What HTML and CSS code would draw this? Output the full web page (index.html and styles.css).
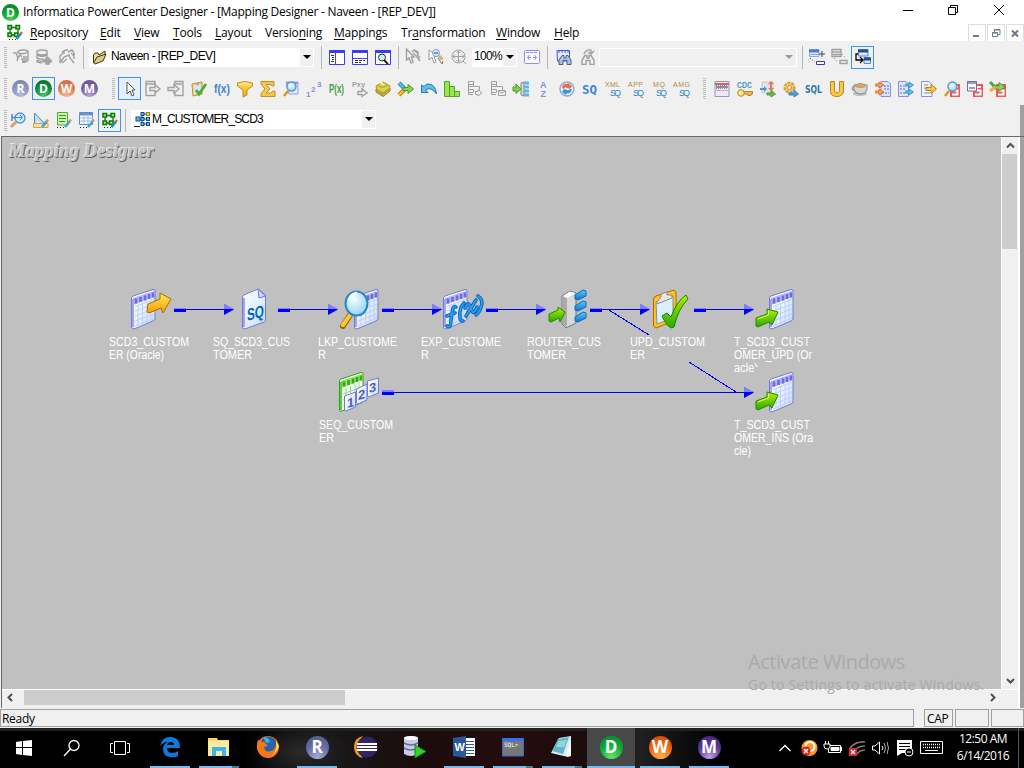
FILE: index.html
```html
<!DOCTYPE html>
<html lang="en">
<head>
<meta charset="utf-8">
<title>Informatica PowerCenter Designer</title>
<link rel="stylesheet" href="styles.css">
</head>
<body>
<svg class="defs" width="0" height="0">
  <defs>
    <linearGradient id="paper" x1="0" y1="0" x2="1" y2="1"><stop offset="0" stop-color="#fff"/><stop offset=".5" stop-color="#e4f2ff"/><stop offset="1" stop-color="#bcdcff"/></linearGradient>
    <linearGradient id="gold" x1="0" y1="0" x2="0" y2="1"><stop offset="0" stop-color="#ffe95a"/><stop offset="1" stop-color="#f0a000"/></linearGradient>
    <linearGradient id="lime" x1="0" y1="0" x2="0" y2="1"><stop offset="0" stop-color="#b4f000"/><stop offset="1" stop-color="#28a800"/></linearGradient>
    <linearGradient id="sky" x1="0" y1="0" x2="0" y2="1"><stop offset="0" stop-color="#5cc8ff"/><stop offset="1" stop-color="#0a74d0"/></linearGradient>
    <radialGradient id="lens" cx=".4" cy=".35" r=".7"><stop offset="0" stop-color="#f4fdff"/><stop offset="1" stop-color="#8ed2f4"/></radialGradient>
    <symbol id="sheet" viewBox="0 0 26 42">
      <path d="M1.500 10Q1.500 9 3 8L23 1.500Q25 1 25 3V31Q25 32 23 33L4 41Q1.500 41 1.500 39Z" fill="url(#paper)" stroke="#7676d8"/>
      <path d="M3 10L24 3V9L3 17Z" fill="#b6b6f6"/>
      <path d="M6 10.500v5M10.500 9v5M15 7.500v5M19 6v5M23 4.500v5" stroke="#6c6ce0" stroke-width="2.600"/>
      <path d="M5 18.500L24 11.500M5 23L24 16M5 28L24 21M5 33L24 26M5 38L24 30" stroke="#c4ccf8"/>
      <path d="M8 17V38M12.500 15V36M17 13V35M21 11V33" stroke="#c4ccf8"/>
      <path d="M3 11V39" stroke="#a4a4f6" stroke-width="2"/>
    </symbol>
    <symbol id="sheetGreen" viewBox="0 0 26 42">
      <path d="M1.500 10Q1.500 9 3 8L23 1.500Q25 1 25 3V31L4 40Q1.500 41 1.500 39Z" fill="#f2fff2" stroke="#2e9e20"/>
      <path d="M3 10L24 3V9L3 17Z" fill="#8ce460"/>
      <path d="M6 10.500v5M10.500 9v5M15 7.500v5M19 6v5M23 4.500v5" stroke="#3aa818" stroke-width="2.600"/>
      <path d="M5 23L24 16M5 29L24 22M5 35L24 28M8 17V38M12.500 15V36M17 13V35M21 11V33" stroke="#8cdc8c"/>
      <path d="M3 11V39" stroke="#5ccc40" stroke-width="2"/>
    </symbol>
    <symbol id="pushGreen" viewBox="0 0 26 22"><path d="M2 12L13 8V3L24 6L18 19L15 16L4 21L2 20Z" fill="url(#lime)" stroke="#258a00"/><path d="M3.500 13L14.500 9V5" fill="none" stroke="#e4ff60"/></symbol>
    <symbol id="fold" viewBox="0 0 16 16"><path d="M1.500 14V6L3 4H6L7 6L13 2V7" fill="#e9dd98" stroke="#403818"/><path d="M1.500 14L5 8L14 5L11 12L3 15Z" fill="#d8cc88" stroke="#403818"/></symbol>
    <symbol id="graph" viewBox="0 0 16 16"><g fill="#a4f080" stroke="#087808" stroke-width="1.500"><rect x="1" y="1.500" width="3.500" height="3.500"/><rect x="9" y="1.500" width="3.500" height="3.500"/><rect x="1" y="9" width="3.500" height="3.500"/><rect x="7.500" y="9" width="3.500" height="3.500"/></g><path d="M5 3.500H9M3 5.500V9M11 5.500V9M5 11H8" stroke="#087808" stroke-width="1.300"/><path d="M9.500 15L14 9.500" stroke="#1888d8" stroke-width="2.500"/><path d="M13.500 10L15 8" stroke="#f06040" stroke-width="2.500"/><path d="M2 15.500H9" stroke="#222" stroke-dasharray="1 2"/></symbol>
    <symbol id="pen" viewBox="0 0 16 16"><path d="M9 15L14 9" stroke="#3ba2df" stroke-width="2.500"/><path d="M13.500 9.500L15 7.500" stroke="#f38c65" stroke-width="2.500"/></symbol>
    <symbol id="dots" viewBox="0 0 16 16"><path d="M1 15.500H9" stroke="#222" stroke-dasharray="1 2"/></symbol>
    <symbol id="badge" viewBox="0 0 16 16"><rect x="6" y="3" width="10" height="13" fill="#f05858"/><path d="M14 6H9.500V9.500H13.500V13.500H8" fill="none" stroke="#fff" stroke-width="2"/></symbol>
    <symbol id="mag" viewBox="0 0 16 16"><path d="M5 10L1 15" stroke="#d59a30" stroke-width="2.600"/><circle cx="8.500" cy="5.500" r="4.500" fill="url(#lens)" stroke="#5c91cd" stroke-width="1.400"/></symbol>
    <symbol id="binoc" viewBox="0 0 16 16"><path d="M3 15.500V11L6 6.500H8V9H10V6.500H12L15 11V15.500H11V11.500H7V15.500Z"/></symbol>
  </defs>
</svg>

<header class="title">
  <span class="ball green app">D</span>
  <h1>Informatica PowerCenter Designer - [Mapping Designer - Naveen - [REP_DEV]]</h1>
  <svg class="winbtns" width="108" height="20" viewBox="0 0 108 20" fill="none" stroke="#000"><path d="M1 8.500H11"/><path d="M46.500 5.500H53.500V12.500H46.500ZM48.500 5V3.500H55.500V10.500H54"/><path d="M92 3L102 13M102 3L92 13"/></svg>
</header>

<nav class="menu">
  <svg class="i menuicon"><use href="#graph"/></svg>
  <span class="m1"><u>R</u>epository</span><span class="m2"><u>E</u>dit</span><span class="m3"><u>V</u>iew</span><span class="m4"><u>T</u>ools</span><span class="m5"><u>L</u>ayout</span><span class="m6">Versio<u>n</u>ing</span><span class="m7"><u>M</u>appings</span><span class="m8">Tr<u>a</u>nsformation</span><span class="m9"><u>W</u>indow</span><span class="m10"><u>H</u>elp</span>
  <div class="mdi">
    <b><svg width="16" height="16"><path d="M4 11H10" stroke="#6b7a8c" stroke-width="2"/></svg></b>
    <b><svg width="16" height="16" fill="none" stroke="#6b7a8c"><path d="M4.500 7.500H9.500V11.500H4.500ZM4 8H10M6.500 7V4.500H12V9.500H10M6 5H12"/></svg></b>
    <b><svg width="16" height="16"><path d="M5 5.500L11 11.500M11 5.500L5 11.500" stroke="#6b7a8c" stroke-width="2"/></svg></b>
  </div>
</nav>

<section class="tools">
  <div class="bar bar1">
    <i class="grip"></i>
    <span class="c"><svg class="i gray"><path d="M5 2Q10 0 15 2V11Q13 14 9 13M5 2V4M5 4Q10 6 15 3M0 4H3L5 9L7 6L9 8M5 9L4 12M8 10H14M9 12H13M10 8H14"/></svg></span>
    <span class="c"><svg class="i gray"><path d="M1 2Q6 0 11 2V5Q6 7 1 5ZM1 6Q6 9 11 6V9M1 6V9Q5 11 8 10M1 11Q4 13 8 12M1 11V13L6 14"/><path class="solid" d="M10 9H13V11H15V13H13V15H10V13H8V11H10Z"/></svg></span>
    <span class="c"><svg class="i gray"><path d="M1 14V7L4 4H6M3 3L7 1H9M9 3L13 1L15 4V10M1 14L5 8L10 6L11 9L15 14M8 10L3 14M12 4L15 7"/></svg></span>
    <i class="sep s83"></i>
    <span class="combo proj"><svg class="i"><use href="#fold"/></svg><span class="val">Naveen - [REP_DEV]</span><i class="dd"></i></span>
    <i class="sep s321"></i>
    <span class="c"><svg class="i pane"><path d="M.5 1.500H15.500V15.500H.5ZM6.500 3V15"/><path class="head" d="M0 2.500H16"/><path d="M2 6.500H5M3 8.500H5M3 10.500H5M2 12.500H5" stroke="#333"/></svg></span>
    <span class="c"><svg class="i pane"><path d="M.5 1.500H15.500V15.500H.5ZM1 9.500H15"/><path class="head" d="M0 2.500H16"/><path d="M3 11.500H13M3 13.500H9" stroke="#333" stroke-dasharray="3 1"/></svg></span>
    <span class="c"><svg class="i pane"><path d="M.5 1.500H15.500V15.500H.5Z"/><path class="head" d="M0 2.500H16"/><circle cx="7" cy="8.500" r="3.500" fill="#c0f6f0" stroke="#333"/><path d="M9 11L13 15" stroke="#222" stroke-width="2"/></svg></span>
    <i class="sep s398"></i>
    <span class="c"><svg class="i gray"><path d="M1.500 0V11L4 9L6 14L8 13L6.500 8H9ZM7 3L9 1L12 4M8 4L12 8L15 12M12 5L15 9M10 1L13 3V7"/></svg></span>
    <span class="c"><svg class="i"><path d="M1 1V11L4 8L6 14L8 13L6 7H10Z" fill="#fff" stroke="#9a9a9a"/><path d="M11 7L14.500 10.500" stroke="#e0b060" stroke-width="3"/><circle cx="8" cy="4" r="3.500" fill="#dff4ff" stroke="#7794c9"/><path d="M6 4H10" stroke="#4070c0" stroke-width="1.500"/><path d="M10 9L14 15L15 12" stroke="#777"/></svg></span>
    <span class="c"><svg class="i gray fine"><circle cx="7.500" cy="7.500" r="6.500"/><path d="M7.500 2V13M2 7.500H13M5.500 4L7.500 2L9.500 4M5.500 11L7.500 13L9.500 11M4 5.500L2 7.500L4 9.500M11 5.500L13 7.500L11 9.500M12 12L15 15"/></svg></span>
    <span class="combo pct"><span class="val">100%</span><i class="dd"></i></span>
    <span class="c afterpct"><svg class="i"><g fill="#f8f8ff" stroke="#8f8ff3"><rect x=".5" y="1.500" width="15" height="13" rx="1"/><path d="M5.500 6L3.500 8.500L5.500 11M10.500 6L12.500 8.500L10.500 11M4 8.500H7M9 8.500H12" fill="none"/><path d="M2 3.500H14" stroke-dasharray="3 1"/></g></svg></span>
    <i class="sep s548"></i>
    <span class="c"><svg class="i"><path d="M1 1.500H13.500V12H1.500Z" fill="#e4efff" stroke="#3f53ec"/><path d="M2 3H13" stroke="#3f53ec" stroke-dasharray="2 1"/><g fill="#b0c0d8" stroke="#4b6288"><use href="#binoc"/></g></svg></span>
    <span class="c"><svg class="i gray"><g fill="none" stroke="#a0a0a0" stroke-width="1.400"><use href="#binoc"/></g><path d="M5 5Q7 0 12 1V4M9 3L12 5L15 2"/></svg></span>
    <span class="combo blank"><i class="dd"></i></span>
    <i class="sep s802"></i>
    <span class="c"><svg class="i"><path d="M.5 .5H10V7.500H.5Z" fill="#e1ecff" stroke="#8fa9de"/><path d="M0 2H10" stroke="#4e79d5" stroke-width="3"/><path d="M1 5.500H10" stroke="#8fa9de"/><path d="M10 5H16M13 2V8" stroke="#444"/><path d="M1 9L6 13" stroke="#333" stroke-dasharray="1 2"/><path d="M7.500 12.500H15.500V15.500H7.500Z" fill="#fff" stroke="#3939ae"/></svg></span>
    <span class="c"><svg class="i gray"><path d="M0 .5H9V7.500H0ZM0 3H9M1 5.500H9M8 11.500H15V14.500H8Z"/><path d="M2 9L6 13M10 5L14 9" stroke-dasharray="1 2"/></svg></span>
    <span class="c on"><svg class="i"><g fill="#d8e9ff" stroke="#5c82cd"><path d="M3.500 .5H13V7H3.500ZM9 8.500H15.500V14.500H9Z"/></g><path d="M3 2H13M9 10H16" stroke="#294c99" stroke-width="3"/><path d="M3 5H1V11H7M5 8L8 11L5 14" fill="none" stroke="#000" stroke-width="1.300"/></svg></span>
  </div>

  <div class="bar bar2">
    <i class="grip"></i>
    <span class="c"><span class="ball slate">R</span></span><span class="c on"><span class="ball green">D</span></span><span class="c"><span class="ball orange">W</span></span><span class="c"><span class="ball purple">M</span></span>
    <i class="grip g114"></i>
    <span class="c on tint"><svg class="i"><path d="M5 1V13L8 10L10 15L12 14L10 9H13Z" fill="#fff" stroke="#555"/></svg></span>
    <span class="c"><svg class="i gray"><path d="M10 5V.5H1V14.500H10V12M1 3H10M5 6.500H10V3.500L15 8L10 12V9.500H5Z"/></svg></span>
    <span class="c"><svg class="i gray"><path d="M7 4V.5H15V14.500H7V12M8 3H14M0 6.500H6V3.500L11 8L6 12V9.500H0Z"/></svg></span>
    <span class="c"><svg class="i"><path d="M1 3L11 1V13L2 15Z" fill="#efd986" stroke="#bd8f3c"/><path d="M3 5L10 4V11L3 13Z" fill="#cfeafa"/><path d="M5 2L8 1V4L5 4Z" fill="#aaa"/><path d="M5 9L8 13L15 3" fill="none" stroke="#4dab3b" stroke-width="2.800"/></svg></span>
    <span class="c"><svg class="i"><text x="0" y="12" font-size="12" font-weight="700" fill="#3b84cf" textLength="16" lengthAdjust="spacingAndGlyphs">f(x)</text></svg></span>
    <span class="c"><svg class="i"><path d="M.5 2Q8-1 15.500 2V5L10 9V14L6 16V9L.5 5Z" fill="url(#gold)" stroke="#c48d2b"/><ellipse cx="8" cy="3" rx="6" ry="1.500" fill="#ffe07c"/></svg></span>
    <span class="c"><svg class="i"><path d="M1 .5H14V5H12L11 3.500H6L10 8L6 12H11L13 10H15V15.500H1V12.500L5 8L1 3Z" fill="#f4c848" stroke="#c38d2d"/></svg></span>
    <span class="c"><svg class="i"><path d="M3 1H15V13H6Z" fill="#e6e9ff" stroke="#9999df"/><path d="M4 2H15" stroke="#9999df" stroke-width="2"/><use href="#mag"/></svg></span>
    <span class="c"><svg class="i pix"><text x="0" y="16" font-size="8">1</text><text x="5" y="11" font-size="8">2</text><text x="11" y="6" font-size="8">3</text></svg></span>
    <span class="c"><svg class="i"><text x="0" y="12" font-size="12" font-weight="700" fill="#459d45" textLength="15" lengthAdjust="spacingAndGlyphs">P(x)</text></svg></span>
    <span class="c"><svg class="i gray"><path d="M6 10.500H10V8L15 12L10 15.500V13.500H6Z"/><text x="0" y="6" font-size="8" font-weight="700" textLength="13" lengthAdjust="spacingAndGlyphs">Pxy</text></svg></span>
    <span class="c"><svg class="i"><path d="M1 8L7 13L15 7V10L8 15.500L1 11Z" fill="#dfa62d" stroke="#b37918"/><path d="M1 5L8 1L15 5L14 9L8 13L2 9Z" fill="#f4c846" stroke="#be8c27"/><path d="M3 4Q8 9 13 3M3 9L8 12L13 8" fill="none" stroke="#7cc853" stroke-width="1.500"/><path d="M5 1L9 4" stroke="#fff4b0" stroke-width="2"/></svg></span>
    <span class="c"><svg class="i"><path d="M1 2L7 8" stroke="#2a87c9" stroke-width="4"/><path d="M1 2L7 8" stroke="#60c4f2" stroke-width="2"/><path d="M1 14L7 8" stroke="#b98008" stroke-width="4"/><path d="M1 14L7 8" stroke="#f6cc34" stroke-width="2"/><path d="M5 6.500H10V3.500L15.500 8L10 12.500V9.500H5Z" fill="#85d746" stroke="#4a9836"/></svg></span>
    <span class="c"><svg class="i"><path d="M.5 4V11.500H7L4.500 9Q10 5 15.500 13Q14.500 3 7 3Q4.500 3 3 5.500Z" fill="#63bced" stroke="#2578ae"/></svg></span>
    <span class="c"><svg class="i"><path d="M.5 .5H5.500V15.500H.5ZM5.500 5.500H10.500V15.500H5.500ZM10.500 10.500H15.500V15.500H10.500Z" fill="#9ae54c" stroke="#4da52f"/></svg></span>
    <span class="c"><svg class="i gray fine"><path d="M1.500 .5H6.500V5.500H1.500ZM1 3.500H6M1.500 5V13.500H6M1.500 8.500H6.500V11.500H1.500ZM7 5.500H12.500V9M8.500 10.500H11V8.500L15 12L11 15V13.500H8.500Z"/></svg></span>
    <span class="c"><svg class="i gray fine"><path d="M1.500 .5H6.500V5.500H1.500ZM1 3.500H6M1.500 5V13.500H6M1.500 8.500H6.500V11.500H1.500ZM8.500 9.500H15.500V14.500H8.500ZM8.500 10L12 12L15 10M7 5.500H12.500V9"/></svg></span>
    <span class="c"><svg class="i"><path d="M0 6H3V3L8 8L3 12.500V10H0Z" fill="#7dcf45" stroke="#459c30"/><path d="M8 2L11 1V15L8 14Z" fill="#d5d5d5" stroke="#888"/><path d="M11 2H16M11 6H16M11 10H16M11 14H16" stroke="#5cb7e7" stroke-width="3"/></svg></span>
    <span class="c"><svg class="i pix"><text x="4" y="7" font-size="9">A</text><text x="4.500" y="16" font-size="9">Z</text></svg></span>
    <span class="c"><svg class="i"><circle cx="8" cy="8" r="7" fill="#e2f4ff" stroke="#99a6d8" stroke-width="1.500"/><path d="M3 7Q4 2 8 3L9 2L13 5L11 8L8 7Q6 5 5 8Z" fill="#ed6d3d"/><path d="M13 8Q12 13 8 12L7 14L3 11L5 8L8 9Q10 10 11 8Z" fill="#3c94d9"/></svg></span>
    <span class="c"><svg class="i mono"><text x="0" y="13" font-size="13" fill="#3c86d1" textLength="15" lengthAdjust="spacingAndGlyphs">SQ</text></svg></span>
    <span class="c"><svg class="i duo"><text x="0" y="6" textLength="15">XML</text><text class="q" x="5" y="15" textLength="11">SQ</text></svg></span>
    <span class="c"><svg class="i duo"><text x="0" y="6" textLength="15">APP</text><text class="q" x="5" y="15" textLength="11">SQ</text></svg></span>
    <span class="c"><svg class="i duo"><text x="2" y="6" textLength="12">MQ</text><text class="q" x="5" y="15" textLength="11">SQ</text></svg></span>
    <span class="c"><svg class="i duo"><text x="-1" y="6" textLength="17">AMG</text><text class="q" x="5" y="15" textLength="11">SQ</text></svg></span>
    <i class="grip g705"></i>
    <span class="c"><svg class="i"><path d="M1 .5H15V15.500H1Z" fill="#e8ecfc" stroke="#8998c4"/><path d="M1 3H15" stroke="#e95b4d" stroke-width="2"/><path d="M2 5H14M2 7H14" stroke="#333" stroke-dasharray="1 1"/><path d="M3 6H15" stroke="#333" stroke-dasharray="1 1"/><path d="M2 9.500H14" stroke="#e9a09a"/></svg></span>
    <span class="c"><svg class="i"><text x="0" y="7" font-size="9" font-weight="700" fill="#3d96d5" textLength="15" lengthAdjust="spacingAndGlyphs">CDC</text><path d="M5 10.500H15.500V13H14V14.500H11V13H5" fill="#efbd46" stroke="#b9882b"/><circle cx="4" cy="12" r="3.300" fill="#ffe173" stroke="#b9882b"/><circle cx="3" cy="12" r="1" fill="#fff"/></svg></span>
    <span class="c"><svg class="i"><path d="M2 1H13V12H2Z" fill="#e3e3e3" stroke="#ccc"/><path d="M0 7H4V5L7 8L4 11V9H0" fill="#3e9cd7"/><path d="M11 1V9" stroke="#eb794d" stroke-width="2"/><path d="M8 3L11 0L14 3ZM8 7L11 10L14 7Z" fill="#eb794d"/><path d="M7 12H11V9.500L15.500 13L11 16V14H7Z" fill="#67b94a" stroke="#4c9b35"/></svg></span>
    <span class="c"><svg class="i"><circle cx="6.500" cy="6.500" r="4.800" fill="#f5cf76" stroke="#d7a43d" stroke-width="2.500" stroke-dasharray="3 1"/><circle cx="6.500" cy="6.500" r="2" fill="#fff" stroke="#bc8f34"/><path d="M6 12H11V9L15.500 13L11 16V14H6Z" fill="#4ea4dc" stroke="#3680c0"/></svg></span>
    <span class="c"><svg class="i"><text x="-1" y="12" font-size="10" font-weight="700" font-family="DejaVu Sans" fill="#3676a1" textLength="17" lengthAdjust="spacingAndGlyphs">SQL</text></svg></span>
    <span class="c"><svg class="i"><path d="M1.500 .5H5.500V10Q8 13.500 10.500 10V.5H14.500V11Q13 15.500 8 15.500Q2 15.500 1.500 11Z" fill="#f8c83d" stroke="#bd8627"/></svg></span>
    <span class="c"><svg class="i"><ellipse cx="8" cy="12.500" rx="7" ry="2.500" fill="#bbb"/><path d="M2 4Q8 1 15 4V9Q13 13 8.500 13Q4 13 2 9Z" fill="#d8d8d8" stroke="#888"/><ellipse cx="8.500" cy="5" rx="5.500" ry="2" fill="#d7a25a"/><path d="M3 5Q-1 6 1 9L3 10" fill="none" stroke="#999" stroke-width="1.500"/></svg></span>
    <span class="c"><svg class="i"><path d="M6 .5H13L15.500 3V15.500H6Z" fill="#e0e5ff" stroke="#8a8edb"/><path d="M9 5H14M9 8H14M7 12H14" stroke="#4c6dd8" stroke-dasharray="2 1"/><path d="M0 3H4V1L9 4L4 7V5H0M0 10H4V8L9 11L4 14V12H0" fill="#f5a838" stroke="#d06030" stroke-width=".8"/></svg></span>
    <span class="c"><svg class="i"><path d="M.5 .5H8L10.500 3V15.500H.5Z" fill="#e0e5ff" stroke="#8a8edb"/><path d="M2 5H8M2 8H8M2 12H8" stroke="#4c6dd8" stroke-dasharray="2 1"/><path d="M7 3H11V1L15.500 4L11 7V5H7M7 10H11V8L15.500 11L11 14V12H7" fill="#54c6f7" stroke="#3184b9" stroke-width=".8"/></svg></span>
    <span class="c"><svg class="i"><path d="M.5 .5H8L11 4V15.500H.5Z" fill="#f2f5ff" stroke="#8a8edb"/><path d="M3 4H7M3 7H6M3 12H9" stroke="#5796d0"/><path d="M5 6.500H10V3.500L15.500 8L10 12.500V9.500H5Z" fill="#f8c83c" stroke="#b77c22"/></svg></span>
    <span class="c"><svg class="i"><use href="#badge"/><use href="#mag"/></svg></span>
    <span class="c"><svg class="i"><use href="#badge"/><path d="M.5 .5H9.500V10H.5Z" fill="#f6f6ff" stroke="#737095"/><path d="M1 2H9M2 7H8" stroke="#9d9ac0" stroke-width="2"/></svg></span>
    <span class="c"><svg class="i"><use href="#badge"/><path d="M0 1L5 6" stroke="#49a858" stroke-width="3"/><path d="M3 5H9V1.500L15 6L9 10V8H4Z" fill="#8ed658" stroke="#4c9940"/><path d="M0 10L5 6" stroke="#edb42e" stroke-width="3"/></svg></span>
  </div>

  <div class="bar bar3">
    <i class="grip"></i>
    <span class="c"><svg class="i"><path d="M2 2V9M2 5.500H12M10 3L13 5.500L10 8" fill="none" stroke="#4b86cf" stroke-width="1.500"/><circle cx="10" cy="6" r="5" fill="#c8efff" stroke="#5c91cd" stroke-width="1.400"/><path d="M2 5.500H12M10 3L12.500 5.500L10 8" fill="none" stroke="#4b86cf"/><path d="M6 10L1 15" stroke="#d5a270" stroke-width="3"/></svg></span>
    <span class="c"><svg class="i"><path d="M1.500 1V13H13Z" fill="#b9def2" stroke="#4791bc"/><path d="M4 8V11H7Z" fill="#f1f1f1"/><path d="M.5 11.500H15V15.500H.5Z" fill="#f5e3a5" stroke="#d3a445"/><use href="#pen"/></svg></span>
    <span class="c"><svg class="i"><path d="M1.500 .5H11.500V13H1.500Z" fill="#c9f5ac" stroke="#53a839"/><path d="M3 3.500H10M3 6.500H10M3 9.500H9" stroke="#3d9429"/><use href="#dots"/><use href="#pen"/></svg></span>
    <span class="c"><svg class="i"><path d="M.5 .5H13.500V12.500H.5Z" fill="#fff" stroke="#6090ca"/><path d="M1 2H14" stroke="#6090ca" stroke-width="3"/><path d="M1 6H14M1 9H14M5 2V12M9 2V12" stroke="#9bb9df"/><use href="#dots"/><use href="#pen"/></svg></span>
    <span class="c on"><svg class="i"><use href="#graph"/></svg></span>
    <i class="sep s125"></i>
    <span class="combo map"><svg class="i"><path d="M2 8H12M7 3H13M7 13H13M7 3V14" stroke="#333"/><g fill="#55baf0" stroke="#164c8b"><rect x="1" y="6" width="4" height="4"/><rect x="6" y="1.500" width="3" height="3"/><rect x="6" y="6.500" width="3" height="3"/><rect x="6" y="11.500" width="3" height="3"/><rect x="11.500" y="6.500" width="3" height="3"/><rect x="11.500" y="11.500" width="3" height="3"/></g><rect x="11.500" y="1.500" width="3" height="3" fill="#f5d64a" stroke="#9b811c"/><path d="M-1 15.500H5" stroke="#222"/></svg><span class="val">M_CUSTOMER_SCD3</span><i class="dd"></i></span>
  </div>
</section>

<main class="work">
  <div class="canvas">
    <h2>Mapping Designer</h2>
    <svg class="diagram" viewBox="2 137 999 552" width="999" height="552">
      <g class="wires">
        <path d="M174 309.500H225M278 309.500H329M382 309.500H433M486 309.500H537M590 309.500H641M694 309.500H745M382 392.500H745"/>
        <path class="thin" d="M609 310L649 335M689 362L736 392"/>
      </g>
      <g class="ports"><path d="M174 308.500H186M278 308.500H290M382 308.500H394M486 308.500H498M590 308.500H602M694 308.500H706M382 391H394" stroke="#8080ff" stroke-width="2"/><path d="M174 310.500H186M278 310.500H290M382 310.500H394M486 310.500H498M590 310.500H602M694 310.500H706M382 393.500H394" stroke="#00f" stroke-width="3"/></g>
      <g class="heads">
        <path d="M224 304L234 309.500L224 315ZM328 304L338 309.500L328 315ZM432 304L442 309.500L432 315ZM536 304L546 309.500L536 315ZM640 304L650 309.500L640 315ZM744 304L754 309.500L744 315ZM744 387L754 392.500L744 398Z" fill="#00f"/>
        <path d="M224 304L234 309H224ZM328 304L338 309H328ZM432 304L442 309H432ZM536 304L546 309H536ZM640 304L650 309H640ZM744 304L754 309H744ZM744 387L754 392H744Z" fill="#8080ff"/>
      </g>
      <g class="art">
        <use href="#sheet" x="130" y="288" width="26" height="42"/>
        <path d="M148 304L160 299V293L171 299L163 313L161 308L149 313L147 312Z" fill="url(#gold)" stroke="#ad6b00"/>
        <path d="M242.500 298Q242.500 296 244 295L258 289L265.500 295V320Q265 322 264 322L245 329Q242.500 329 242.500 327Z" fill="url(#paper)" stroke="#7676d8"/>
        <path d="M258 289L259 298L265.500 296Z" fill="#c5d8ff" stroke="#7676d8"/><path d="M244 298V327" stroke="#a4a4f6" stroke-width="2"/>
        <text class="sq" transform="translate(247 321) skewY(-15)" textLength="17" lengthAdjust="spacingAndGlyphs">SQ</text>
        <use href="#sheet" x="353" y="288" width="26" height="42"/>
        <path d="M350 315L343 326" stroke="#9e6300" stroke-width="6" stroke-linecap="round"/><path d="M350 315L343 325" stroke="#ffc82c" stroke-width="4" stroke-linecap="round"/>
        <ellipse cx="356.500" cy="303.500" rx="11" ry="12" fill="url(#lens)" stroke="#2687c7" stroke-width="2"/><path d="M349 300Q351 294 357 293" stroke="#fff" stroke-width="3" fill="none"/>
        <use href="#sheet" x="442" y="288" width="26" height="42"/>
        <g class="fx"><path d="M447 326Q451 329 451 320L453 308Q454 306 456 307M447 316L455 313M464 303Q459 308 460 317Q460 321 463 321M478 296Q484 300 481 307Q480 312 476 315M465 308Q468 301 470 306L472 311Q474 315 477 307M466 316L476 300"/><path class="shine" d="M447 326Q451 329 451 320L453 308Q454 306 456 307M447 316L455 313M464 303Q459 308 460 317Q460 321 463 321M478 296Q484 300 481 307Q480 312 476 315M465 308Q468 301 470 306L472 311Q474 315 477 307M466 316L476 300"/></g>
        <path d="M562 296L570 291L576 293V323L566 328L562 324Z" fill="#d8d8d8" stroke="#777"/><path d="M562.500 296L567 298V327L562.500 324Z" fill="#aaa"/><path d="M563 296L570 291.500L575.500 293L567 298Z" fill="#fff"/>
        <g fill="url(#sky)" stroke="#0870b8"><path d="M575 295L583 290L586 291V296L578 300L575 299Z"/><path d="M575 306L583 301L586 302V307L578 311L575 310Z"/><path d="M575 317L583 312L586 313V318L578 322L575 321Z"/></g>
        <path d="M549 314L558 310V307L565 312L560 322L559 318L551 322L549 321Z" fill="url(#lime)" stroke="#258a00"/>
        <path d="M653.500 299Q653.500 297 656 296L674 290L676 292V320L656 328L653.500 326Z" fill="#ffc21d" stroke="#ad6900"/><path d="M656 302L673 296V318L657 324Z" fill="#d9f1ff" stroke="#7f8f98"/><path d="M657 302L661 297V294L667 292V295L672 295V298L657 304Z" fill="#e7e7e7" stroke="#888"/>
        <path d="M662 316L667 313L671 317Q676 302 686 295L688 299Q678 309 674 327Q669 331 662 316Z" fill="url(#lime)" stroke="#168700"/>
        <use href="#sheet" x="768" y="288" width="26" height="42"/><use href="#pushGreen" x="754" y="306" width="26" height="22"/>
        <use href="#sheetGreen" x="338" y="371" width="26" height="42"/>
        <g fill="url(#paper)" stroke="#7676d8"><path d="M344.500 396L355.500 392V407L346 411L344.500 410Z"/><path d="M356.500 389L367 384V400L358 404L356.500 403Z"/><path d="M367.500 381L378.500 378V393L369 397L367.500 396Z"/></g>
        <g class="nums"><text transform="translate(347 408) skewY(-15)">1</text><text transform="translate(358 400) skewY(-15)">2</text><text transform="translate(369 393) skewY(-15)">3</text></g>
        <use href="#sheet" x="768" y="371" width="26" height="42"/><use href="#pushGreen" x="754" y="389" width="26" height="22"/>
      </g>
      <g class="labels">
        <text x="109" y="346" textLength="80" lengthAdjust="spacingAndGlyphs">SCD3_CUSTOM</text><text x="109" y="359" textLength="55" lengthAdjust="spacingAndGlyphs">ER (Oracle)</text>
        <text x="213" y="346" textLength="77" lengthAdjust="spacingAndGlyphs">SQ_SCD3_CUS</text><text x="213" y="359" textLength="39" lengthAdjust="spacingAndGlyphs">TOMER</text>
        <text x="318" y="346" textLength="79" lengthAdjust="spacingAndGlyphs">LKP_CUSTOME</text><text x="318" y="359" textLength="8" lengthAdjust="spacingAndGlyphs">R</text>
        <text x="421" y="346" textLength="80" lengthAdjust="spacingAndGlyphs">EXP_CUSTOME</text><text x="421" y="359" textLength="8" lengthAdjust="spacingAndGlyphs">R</text>
        <text x="527" y="346" textLength="74" lengthAdjust="spacingAndGlyphs">ROUTER_CUS</text><text x="527" y="359" textLength="39" lengthAdjust="spacingAndGlyphs">TOMER</text>
        <text x="630" y="346" textLength="75" lengthAdjust="spacingAndGlyphs">UPD_CUSTOM</text><text x="630" y="359" textLength="15" lengthAdjust="spacingAndGlyphs">ER</text>
        <text x="734" y="346" textLength="76" lengthAdjust="spacingAndGlyphs">T_SCD3_CUST</text><text x="734" y="359" textLength="78" lengthAdjust="spacingAndGlyphs">OMER_UPD (Or</text>
        <text x="734" y="372" textLength="24" lengthAdjust="spacingAndGlyphs">acle)</text>
        <text x="319" y="429" textLength="74" lengthAdjust="spacingAndGlyphs">SEQ_CUSTOM</text><text x="319" y="442" textLength="15" lengthAdjust="spacingAndGlyphs">ER</text>
        <text x="734" y="429" textLength="76" lengthAdjust="spacingAndGlyphs">T_SCD3_CUST</text><text x="734" y="442" textLength="79" lengthAdjust="spacingAndGlyphs">OMER_INS (Ora</text><text x="734" y="455" textLength="17" lengthAdjust="spacingAndGlyphs">cle)</text>
      </g>
      <path d="M754 367H762V377H754Z" fill="silver"/>
    </svg>
  </div>
  <div class="vscroll"><svg width="17" height="17"><path d="M5 10.500L8.500 7L12 10.500" class="chev"/></svg><i></i><svg width="17" height="17"><path d="M5 7L8.500 10.500L12 7" class="chev"/></svg></div>
  <div class="hscroll"><svg width="22" height="17"><path d="M10 4L6.500 7.500L10 11" class="chev"/></svg><i></i><svg width="17" height="17"><path d="M6 4L9.500 7.500L6 11" class="chev"/></svg></div>
  <div class="watermark"><p class="w1">Activate Windows</p><p class="w2">Go to Settings to activate Windows.</p></div>
</main>

<footer class="status"><span class="ready">Ready</span><span class="cap">CAP</span><span class="box"></span><span class="box last"></span></footer>

<div class="taskbar">
  <span class="sys"><svg width="18" height="18"><path d="M1 3L7 2V8H1ZM8 2L17 1V8H8ZM1 9H7V16L1 15ZM8 9H17V17L8 16Z" fill="#fff"/></svg></span>
  <span class="sys"><svg width="18" height="18" fill="none" stroke="#fff" stroke-width="1.300"><circle cx="11" cy="6.500" r="5"/><path d="M7.500 10L1 17"/></svg></span>
  <span class="sys"><svg width="20" height="18" fill="none" stroke="#fff"><path d="M4.500 2.500H15.500V15.500H4.500ZM3 4.500H.5V13.500H3M17 4.500H19.500V13.500H17"/></svg></span>
  <span class="task first run"><svg width="22" height="22"><path d="M1 10Q3 1 11 1Q21 1 21 12H8Q8 17 13 17Q17 17 19 15V20Q16 22 11 21Q4 20 4 13Q4 8 9 6Q4 6 1 10ZM8 9H15Q15 6 12 6Q9 6 8 9Z" fill="#0a7bdc"/></svg></span>
  <span class="task run tail"><svg width="24" height="22"><path d="M1 2H10L11 4H22V20H1Z" fill="#f9d66c"/><path d="M1 5H22V20H1Z" fill="#ffe99a"/><path d="M5 20V11H19V20H15V15H9V20Z" fill="#35b8ed"/></svg></span>
  <span class="task"><svg width="24" height="24"><circle cx="12" cy="12" r="11" fill="#f36b19"/><circle cx="12.500" cy="9.500" r="8" fill="#2862a8"/><path d="M7 2Q13 2 14 7L10 8Z" fill="#39b6df"/><path d="M2 5Q5 7 8 7L12 11L8 12Q9 18 15 16Q21 14 20 5Q25 14 19 20Q12 26 4 19Q-1 13 2 5Z" fill="#f2781d"/><path d="M20 6Q22 17 15 20Q21 18 23 11" fill="#ffdc45"/></svg></span>
  <span class="task run"><span class="ball slate big">R</span></span>
  <span class="task"><svg width="26" height="24"><path d="M10 1Q1 3 1 12Q1 21 10 23Q5 18 5 12Q5 6 10 1Z" fill="#f09a20"/><circle cx="14" cy="12" r="10.500" fill="#322363"/><path d="M4 9H24M4 12H24M4 15H24" stroke="#fff" stroke-width="2"/></svg></span>
  <span class="task"><svg width="24" height="24"><path d="M1 3Q8-1 15 3V19Q8 23 1 19Z" fill="#c9cce6"/><ellipse cx="8" cy="3" rx="7" ry="2" fill="#fff"/><path d="M1 8Q8 12 15 8M1 13Q8 17 15 13" fill="none" stroke="#696d92" stroke-width="1.500"/><path d="M12 10L23 16.500L12 23Z" fill="#39cf28" stroke="#128518"/></svg></span>
  <span class="task run"><svg width="24" height="24"><path d="M12 3H23V21H12Z" fill="#fff"/><path d="M14 6.500H22M14 9.500H22M14 12.500H22M14 15.500H22M14 18.500H22" stroke="#2b579a"/><path d="M1 3L14 1V23L1 21Z" fill="#2b579a"/><text x="2.500" y="16" font-size="11" font-weight="700" fill="#fff">W</text></svg></span>
  <span class="task run tail"><svg width="22" height="20"><path d="M.5 1.500H21.500V19H.5Z" fill="#777" stroke="#3d69c7"/><path d="M1 2.500H21" stroke="#316fff" stroke-width="3"/><text x="2" y="10" font-size="6" font-family="DejaVu Sans Mono" fill="#fff">SQL&gt;</text></svg></span>
  <span class="task run tail"><svg width="24" height="24"><path d="M9 3L21 1V21L18 22L1 18Z" fill="#d4eef2"/><path d="M8 4L19 2L13 19L2 16Z" fill="#65b4c6"/><path d="M9 6L17 5L14 12L6 12Z" fill="#95d3de"/><path d="M15 21L21 4V21Z" fill="#f5f5f5"/></svg></span>
  <span class="task run active"><span class="ball green big">D</span></span>
  <span class="task run"><span class="ball orange big">W</span></span>
  <span class="task run"><span class="ball purple big">M</span></span>
  <div class="tray">
    <svg width="24" height="20"><path d="M6.500 13L12 7.500L17.500 13" fill="none" stroke="#fff" stroke-width="1.300"/></svg>
    <svg width="24" height="20"><circle cx="12.500" cy="10" r="8" fill="#ff991e"/><circle cx="13" cy="8.500" r="4.500" fill="none" stroke="#fff" stroke-width="2"/><circle cx="9" cy="13" r="4.500" fill="#d71d20"/><path d="M7 11L11 15M11 11L7 15" stroke="#fff" stroke-width="1.500"/></svg>
    <svg width="24" height="20" fill="none" stroke="#fff"><path d="M9 7.500H19.500V14.500H7.500V11M20.500 9V13M3 6H9V9Q8 11 6 11Q3 11 3 8ZM4.500 6V3M7.500 6V3"/><path d="M10 9.500H18V12.500H10Z" fill="#fff"/></svg>
    <svg width="24" height="20"><path d="M5 10Q11 3 20 4M9 13Q13 8 20 8M12 16Q15 12 20 12" fill="none" stroke="#777" stroke-width="1.700"/><path d="M4 10H12V18H4Z" fill="#d9252b"/><path d="M6 12L10 16M10 12L6 16" stroke="#fff" stroke-width="1.200"/></svg>
    <svg width="24" height="20" fill="none" stroke="#fff"><path d="M3.500 8H6L10.500 4V16L6 12H3.500ZM13 8Q15 10 13 12"/><path d="M15 5Q18 10 15 15M18 4Q21 10 18 16" stroke="#aaa"/></svg>
    <svg width="26" height="20"><path d="M4 2H19V15H9L4 18Z" fill="#fff"/><path d="M6 5.500H17M6 8.500H17M6 11.500H13" stroke="#000"/><circle cx="16" cy="14" r="4" fill="#000" stroke="#fff"/><path d="M14 14H18" stroke="#fff"/></svg>
    <svg width="28" height="20"><path d="M1.500 3.500H23.500V15.500H1.500Z" fill="#000" stroke="#fff"/><path d="M4 6.500H22M4 9.500H22" stroke="#fff" stroke-width="1.500" stroke-dasharray="1 1"/><path d="M6 12.500H19" stroke="#fff"/></svg>
    <div class="clock"><time>12:50 AM</time><time>6/14/2016</time></div>
  </div>
</div>
</body>
</html>
```
FILE: styles.css
```css
* { box-sizing: border-box; }
html, body { margin: 0; height: 100%; overflow: hidden; }
body { width: 1024px; height: 768px; background: #f0f0f0; color: #000; font: 12px/16px "Open Sans", "Noto Sans", sans-serif; display: flex; flex-direction: column; }
svg { display: block; flex: none; font-family: "Liberation Sans", Arial, sans-serif; }
.defs { position: absolute; }
.i { width: 16px; height: 16px; overflow: visible; fill: none; }

.title { height: 24px; background: #fff; display: flex; align-items: center; padding: 0 13px 0 2px; flex: none; }
.title h1 { font-size: 12px; font-weight: 400; margin: 0 auto 0 4px; letter-spacing: -.27px; white-space: nowrap; }
.winbtns { margin-right: 1px; }

.ball { width: 17px; height: 17px; border-radius: 50%; color: #fff; font: 700 12px/17px "Open Sans", sans-serif; text-align: center; display: block; flex: none; }
.green { background: radial-gradient(circle at 50% 90%, #48c468, #0b8b3b 55%, #096e31); }
.slate { background: radial-gradient(circle at 50% 90%, #b4b9d8, #8a94be 55%, #7680a8); }
.orange { background: radial-gradient(circle at 50% 90%, #f9b892, #e67848 55%, #c56848); }
.purple { background: radial-gradient(circle at 50% 90%, #b7a0d5, #7c5ca8 55%, #67508a); }
.app { background: radial-gradient(circle at 50% 90%, #48d458, #08a030 55%, #087828); }
.big { width: 23px; height: 23px; line-height: 22px; font-size: 17px; }
.big.green { background: radial-gradient(circle at 50% 90%, #68e468, #08a838 55%, #088828); }
.big.slate { background: radial-gradient(circle at 50% 90%, #a4a9d8, #6068a0 55%, #50588c); }
.big.orange { background: radial-gradient(circle at 50% 90%, #ffb045, #ed5d0b 60%, #c44606); }
.big.purple { background: radial-gradient(circle at 50% 90%, #b7a0e5, #5a3494 55%, #43237a); }

.menu { height: 17px; background: #fff; display: flex; align-items: center; flex: none; padding-left: 7px; line-height: 17px; white-space: nowrap; }
.menu u { text-underline-offset: 2px; }
.menuicon { margin: -2px 7px 0 0; }
.menu span { letter-spacing: -.19px; flex: none; }
.m1 { width: 70px; } .m2 { width: 34px; } .m3 { width: 39px; } .m4 { width: 42px; } .m5 { width: 50px; } .m6 { width: 69px; } .m7 { width: 67px; } .m8 { width: 95px; } .m9 { width: 58px; } .m10 { width: 30px; }
.mdi { display: flex; gap: 1px; margin-left: auto; }
.mdi b { width: 18px; height: 18px; border: 1px solid #dedede; background: #fff; }

.tools { height: 95px; flex: none; display: flex; flex-direction: column; background: linear-gradient(#a0a0a0, #a0a0a0) 1020px 64px / 4px 31px no-repeat #f0f0f0; }
.bar { display: flex; align-items: center; padding-left: 4px; flex: none; }
.bar1 { height: 32px; } .bar2 { height: 31px; } .bar3 { height: 32px; }
.grip { width: 3px; height: 21px; margin-right: 2px; flex: none; background: repeating-linear-gradient(#bcbcbc 0 1px, #f0f0f0 1px 2px); }
.bar3 .grip { margin-right: -1px; }
.bar2 .g114 { margin: 0 3px 0 11px; }
.bar2 .g705 { margin: 0 4px 0 10px; }
.sep { width: 1px; height: 23px; background: #b5b5b5; flex: none; }
.s83 { margin: 0 5px; } .s321 { margin: 0 3px 0 6px; } .s398 { margin: 0 2px 0 4px; } .s548 { margin: 0 4px; } .s802 { margin: 0 2px 0 5px; } .s125 { margin: 0 5px 0 4px; }
.c { width: 23px; height: 23px; display: flex; align-items: center; justify-content: center; flex: none; }
.c.on { border: 1px solid #3a96f5; }
.c.tint { background: #e5eef9; }
.gray path, .gray circle { stroke: #a0a0a0; stroke-width: 1.4; }
.fine path, .fine circle { stroke-width: 1; }
.gray .solid { fill: #a8a8a8; }
.gray text { fill: #a0a0a0; }
.pane path:first-child { fill: #fff; stroke: #3c3cf0; }
.pane .head { stroke: #3c3cf0; stroke-width: 3; }
.pix text { fill: #8a8fe0; font-weight: 700; }
.mono text { font-family: "DejaVu Sans Mono", monospace; font-weight: 700; }
.duo text { fill: #b58840; font-size: 7px; }
.duo .q { fill: #2d86d0; font-size: 9px; }
.combo { height: 19px; background: #fff; display: flex; align-items: center; flex: none; font: 12px/18px "Liberation Sans", Arial, sans-serif; }
.combo .dd { margin: 1px 1px 1px auto; width: 13px; height: 17px; background: #f0f0f0; flex: none; display: flex; align-items: center; justify-content: center; }
.dd::before { content: ""; border: 4px solid transparent; border-top-color: #000; border-bottom: 0; }
.combo .val { white-space: nowrap; }
.proj { width: 225px; padding-left: 3px; } .proj .val { margin: -3px 0 0 3px; letter-spacing: -.58px; }
.pct { width: 45px; padding-left: 2px; margin-left: 2px; } .pct .val { margin-top: -3px; letter-spacing: -.7px; }
.afterpct { margin-left: 3px; }
.proj + .sep { margin-left: 7px; }
.blank { width: 198px; margin-left: 1px; background: #f0f0f0; border: 1px solid #fff; } .blank .dd::before { border-top-color: #999; }
.map { width: 245px; padding-left: 4px; margin-top: -2px; } .map .val { margin: -1px 0 0 1px; letter-spacing: -.87px; }

.work { position: relative; flex: none; height: 572px; display: grid; grid-template: 552px 18px / 999px 17px; border: solid #696969; border-width: 1px 0 0 1px; margin: 0 0 0 1px; background: linear-gradient(90deg, #f0f0f0 1016px, #fff 1016px 1018px, #a0a0a0 1018px); }
.canvas { background: silver; overflow: hidden; display: grid; }
.canvas > * { grid-area: 1 / 1; }
.canvas h2 { margin: 3px 0 0 7px; font: italic 700 19px/22px "Liberation Serif", "Times New Roman", serif; color: #c0c0c0; text-shadow: -1px -1px #e5e5e5, 1px 1px #606060; letter-spacing: -.08px; height: 22px; }
.wires { stroke: #0000f0; fill: none; shape-rendering: crispEdges; }
.ports { shape-rendering: crispEdges; }
.labels { fill: #fff; font-size: 12px; }
.sq { fill: #0065bd; font-size: 17px; font-weight: 700; }
.fx path { fill: none; stroke: #0a68c0; stroke-width: 3.6; stroke-linecap: round; }
.fx .shine { stroke: #2ba0f0; stroke-width: 1.6; }
.nums { fill: #555db0; font-size: 13px; font-weight: 700; }
.chev { fill: none; stroke: #505050; stroke-width: 2; }
.vscroll { border-left: 1px solid #fff; display: flex; flex-direction: column; }
.vscroll i { height: 95px; width: 15px; background: #cdcdcd; margin-bottom: auto; }
.hscroll { grid-column: 1 / 3; border-top: 1px solid #fff; display: flex; padding-right: 16px; }
.hscroll i { width: 321px; height: 15px; background: #cdcdcd; margin-right: auto; }
.watermark { position: absolute; left: 746px; top: 512px; color: #aaa; white-space: nowrap; }
.watermark p { margin: 0; }
.w1 { font-size: 20px; line-height: 26px; letter-spacing: -.45px; }
.w2 { font-size: 14px; line-height: 20px; letter-spacing: .2px; }

.status { height: 20px; flex: none; display: flex; padding: 1px 0; line-height: 17px; background: #f0f0f0; }
.status span { border: 1px solid #a0a0a0; height: 18px; }
.ready { width: 914px; padding-left: 1px; letter-spacing: -.3px; }
.cap { margin-left: 10px; width: 29px; padding-left: 2px; letter-spacing: -.3px; }
.status .box { width: 34px; margin-left: 2px; }
.status .last { width: 33px; }

.taskbar { height: 40px; flex: none; display: flex; color: #fff; background: linear-gradient(#202020 0 3px, transparent 3px), radial-gradient(ellipse 50px 30px at 300px 24px, #292929, transparent), linear-gradient(90deg, #000 0 240px, #171717 330px, #1c0c0c 420px, #260c0e 520px, #190c0c 590px, #202020 640px, #000 720px); }
.sys { width: 48px; display: flex; align-items: center; justify-content: center; }
.task { width: 40px; margin-right: 9px; display: flex; align-items: center; justify-content: center; flex: none; border-bottom: 2px solid transparent; }
.first { margin-left: 6px; }
.run { border-color: #76b9ed; }
.tail { border-image: linear-gradient(90deg, #76b9ed 80%, #4f7894 80%) 2; border-width: 0 0 2px; }
.active { width: 48px; margin: 0 5px 0 -4px; background: #484848; }
.tray { margin-left: auto; display: flex; align-items: center; width: 251px; }
.clock { width: 70px; margin-left: 1px; display: flex; flex-direction: column; text-align: center; line-height: 17px; letter-spacing: -.5px; padding-bottom: 3px; }
.tray::after { content: ""; width: 1px; height: 40px; background: #555; }
```
